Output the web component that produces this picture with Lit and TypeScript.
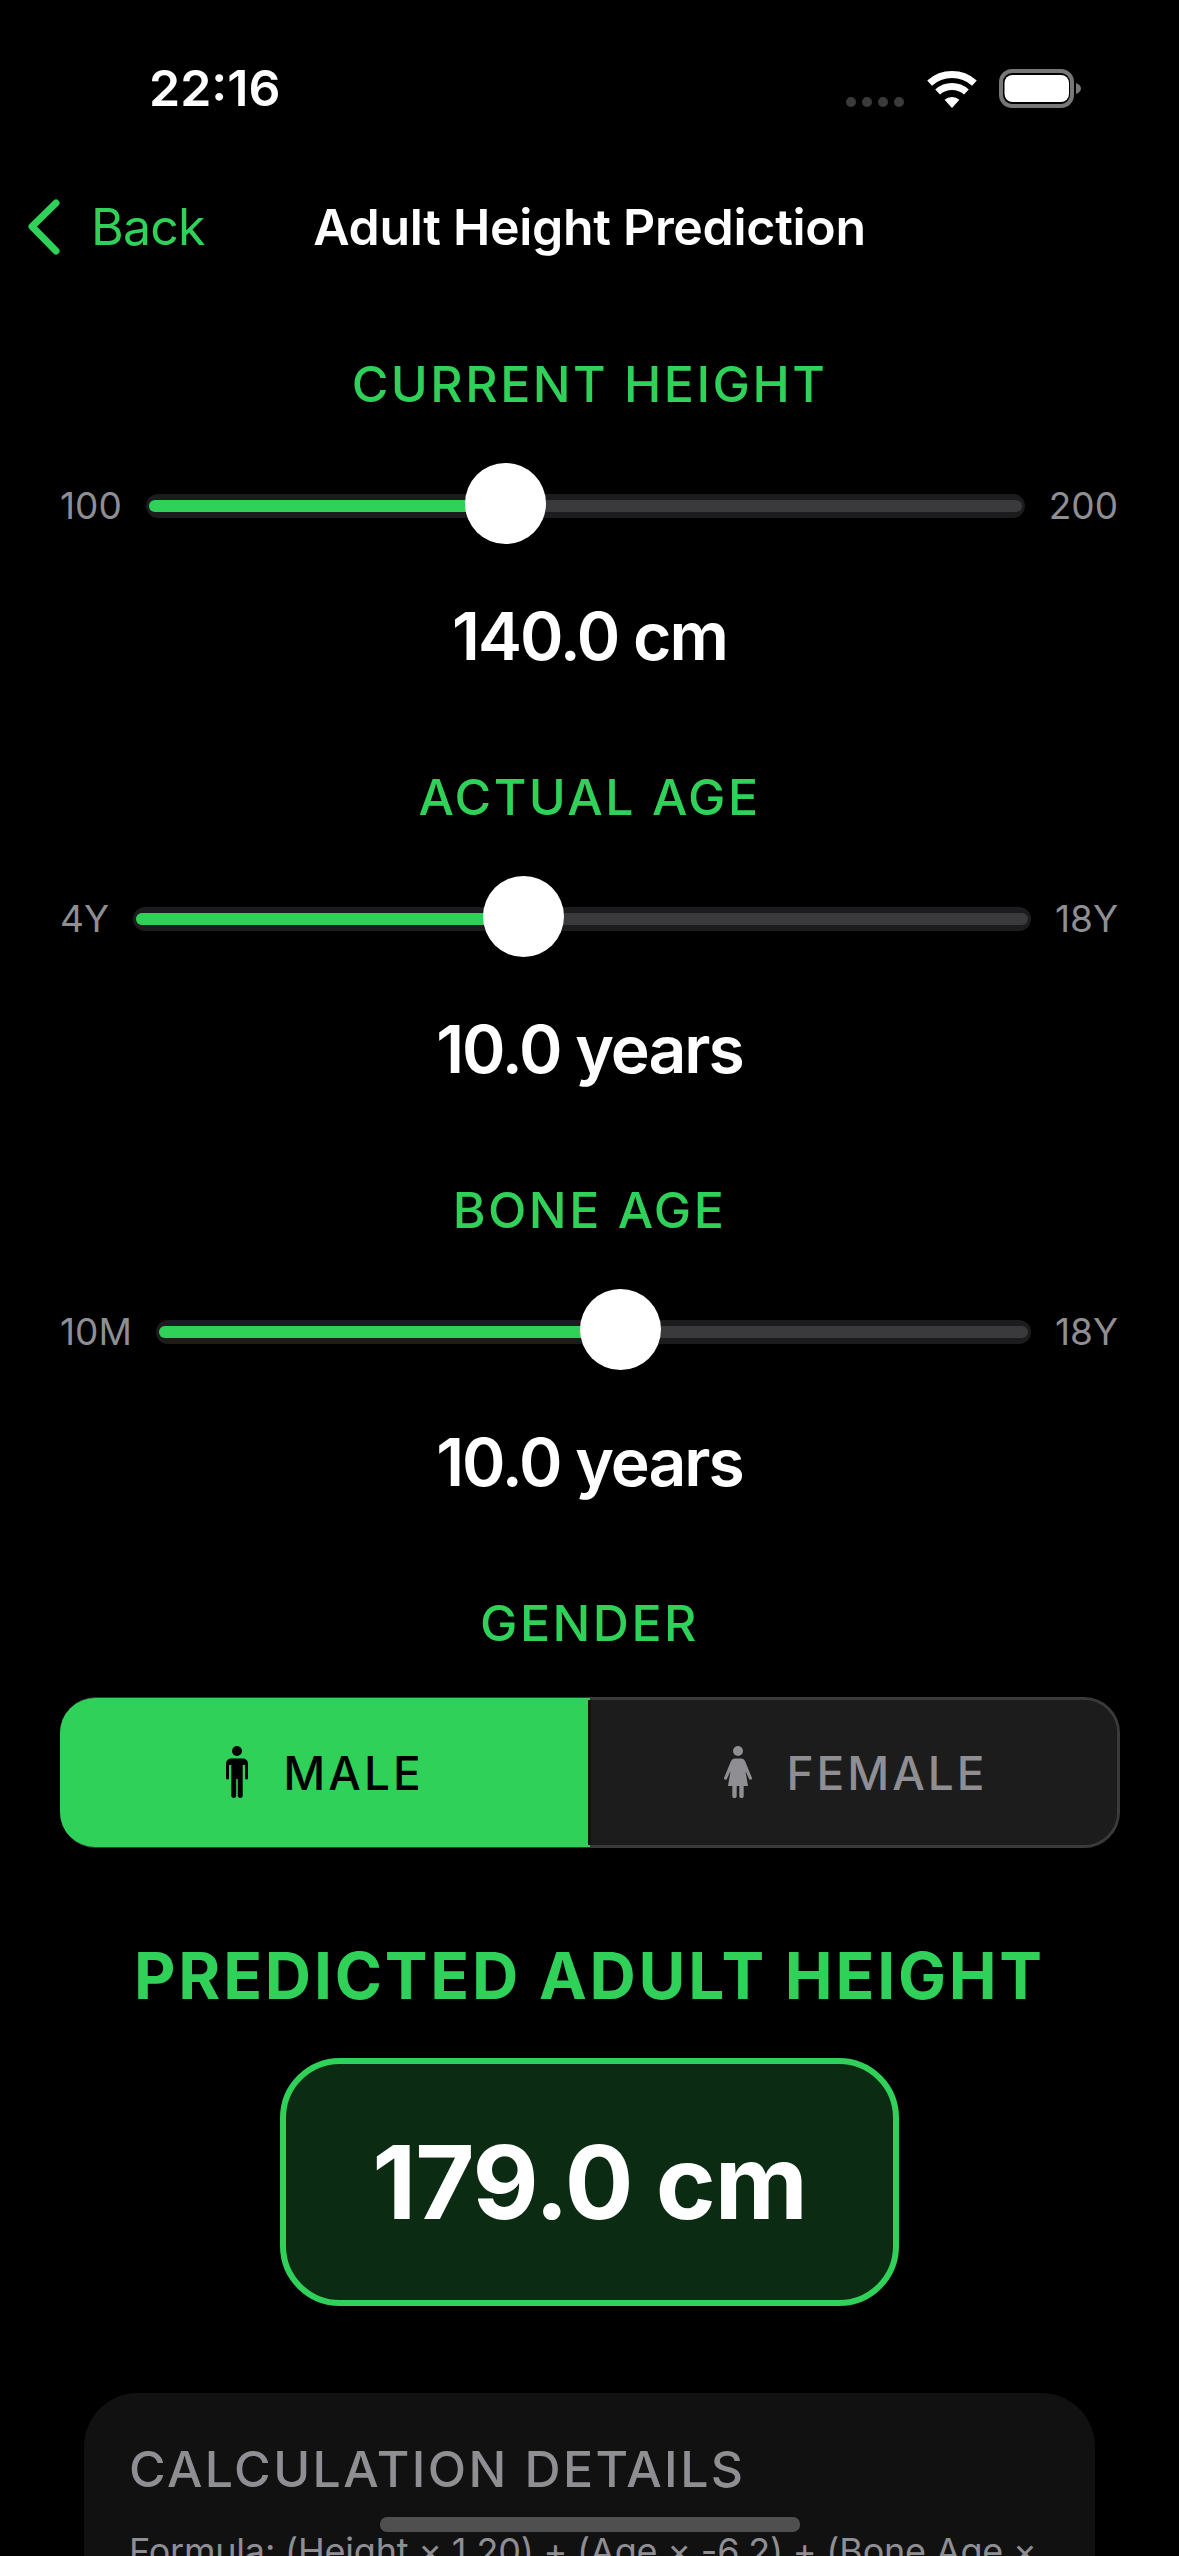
import { LitElement, html, css } from "lit";
import { customElement } from "lit/decorators.js";

interface SliderData {
  label: string;
  min: string;
  max: string;
  frac: number;
  value: string;
}

const SLIDERS: SliderData[] = [
  { label: "CURRENT HEIGHT", min: "100", max: "200", frac: 0.4, value: "140.0 cm" },
  { label: "ACTUAL AGE", min: "4Y", max: "18Y", frac: 6 / 14, value: "10.0 years" },
  { label: "BONE AGE", min: "10M", max: "18Y", frac: 0.534, value: "10.0 years" },
];

const THUMB = 81;

@customElement("app-root")
export class AppRoot extends LitElement {
  static styles = css`
    :host {
      display: block;
      position: relative;
      width: 1179px;
      height: 2556px;
      overflow: hidden;
      background: #000;
      color: #fff;
      font-family: Inter, "Liberation Sans", sans-serif;
    }
    .status {
      height: 176px;
      display: flex;
      align-items: center;
      justify-content: space-between;
      padding: 0 98px 0 149px;
      box-sizing: border-box;
    }
    .time {
      font-size: 50px;
      font-weight: 600;
      line-height: 60px;
      letter-spacing: 0;
    }
    .status-icons {
      display: flex;
      align-items: flex-end;
      gap: 22px;
      height: 40px;
    }
    .dots {
      display: flex;
      gap: 6px;
      margin-right: 1px;
      padding-bottom: 1px;
    }
    .dot {
      width: 10px;
      height: 10px;
      border-radius: 5px;
      background: #3b3b3b;
    }
    .status-icons svg {
      display: block;
    }
    .nav {
      margin-top: 21px;
      height: 60px;
      display: grid;
      grid-template-columns: 1fr auto 1fr;
      align-items: center;
    }
    .back {
      display: flex;
      align-items: center;
      gap: 30px;
      padding-left: 27px;
      color: #30d158;
      font-size: 50px;
      line-height: 60px;
      letter-spacing: -0.8px;
    }
    .back svg {
      display: block;
      flex: none;
    }
    .title {
      font-size: 50px;
      font-weight: 600;
      line-height: 60px;
      letter-spacing: -0.3px;
      white-space: nowrap;
    }
    .sections {
      margin-top: 97px;
      display: flex;
      flex-direction: column;
      gap: 91px;
    }
    .label {
      color: #30d158;
      font-size: 50px;
      font-weight: 500;
      line-height: 60px;
      letter-spacing: 2.5px;
      text-align: center;
      white-space: nowrap;
    }
    .row {
      margin-top: 49px;
      height: 81px;
      padding: 0 61px 0 60px;
      display: flex;
      align-items: center;
      gap: 24px;
    }
    .end {
      color: #8e8e93;
      font-size: 37px;
      line-height: 44px;
      margin-top: 4px;
      white-space: nowrap;
    }
    .track {
      position: relative;
      flex: 1;
      height: 24px;
      margin-top: 5px;
      box-sizing: border-box;
      padding: 6px 3px;
      border-radius: 12px;
      background: #1c1c1e;
    }
    .rail {
      height: 12px;
      border-radius: 6px;
      background: #3a3a3c;
      overflow: hidden;
    }
    .fill {
      height: 100%;
      background: #30d158;
    }
    .thumb {
      position: absolute;
      top: -31px;
      width: 81px;
      height: 81px;
      border-radius: 50%;
      background: #fff;
    }
    .value {
      margin-top: 52px;
      font-size: 66px;
      font-weight: 600;
      line-height: 80px;
      letter-spacing: -2px;
      text-align: center;
      white-space: nowrap;
    }
    .toggle {
      margin: 44px 59px 0 60px;
      height: 151px;
      display: grid;
      grid-template-columns: 1fr 1fr;
      box-sizing: border-box;
      border: 3px solid #3a3a3c;
      border-radius: 36px;
      background: #1c1c1e;
    }
    .opt {
      display: flex;
      align-items: center;
      justify-content: center;
      font-size: 46px;
      font-weight: 500;
      letter-spacing: 3px;
      color: #8e8e93;
    }
    .opt svg {
      display: block;
      flex: none;
      margin-top: -2px;
    }
    .opt.on {
      background: #30d158;
      color: #000;
      gap: 35px;
      margin: -2px 0 -2px -3px;
      border-radius: 35px 0 0 35px;
    }
    .opt.off {
      gap: 34px;
      background: #1c1c1c;
      border-left: 3px solid #141414;
      border-radius: 0 33px 33px 0;
      margin-left: -2px;
      padding-left: 4px;
    }
    .pred {
      margin-top: 88px;
      color: #30d158;
      font-size: 64px;
      font-weight: 700;
      line-height: 80px;
      letter-spacing: 2.8px;
      text-align: center;
      white-space: nowrap;
    }
    .result-wrap {
      margin-top: 42px;
      display: flex;
      justify-content: center;
    }
    .result {
      width: 619px;
      height: 248px;
      box-sizing: border-box;
      border: 6px solid #30d158;
      border-radius: 60px;
      background: #0c2b13;
      display: flex;
      align-items: center;
      justify-content: center;
      font-size: 102px;
      font-weight: 700;
      letter-spacing: -1px;
      white-space: nowrap;
    }
    .card {
      margin: 87px 84px 0;
      padding: 46px 45px 60px;
      background: #111112;
      border-radius: 54px;
      color: #8e8e93;
    }
    .card-title {
      font-size: 50px;
      font-weight: 500;
      line-height: 60px;
      letter-spacing: 2.4px;
      white-space: nowrap;
    }
    .formula {
      margin-top: 22px;
      font-size: 36px;
      line-height: 60px;
      letter-spacing: -0.2px;
    }
    .home {
      position: absolute;
      left: 380px;
      top: 2517px;
      width: 420px;
      height: 15px;
      border-radius: 7px;
      background: #4f4f4f;
    }
  `;

  private wifi() {
    return html`<svg width="50" height="37" viewBox="0 0 50 37" fill="none">
      <path d="M2.6 12.1A33.5 33.5 0 0 1 47.4 12.1" stroke="#fff" stroke-width="7" />
      <path d="M10.6 21A21.5 21.5 0 0 1 39.4 21" stroke="#fff" stroke-width="7" />
      <path d="M25 37L17.6 28.8A11 11 0 0 1 32.4 28.8Z" fill="#fff" />
    </svg>`;
  }

  private battery() {
    return html`<svg width="82" height="39" viewBox="0 0 82 39" fill="none">
      <rect x="2" y="2" width="71" height="35" rx="11" stroke="#777" stroke-width="4" />
      <rect x="5.5" y="6" width="64.5" height="27" rx="8" fill="#fff" />
      <path d="M77 14C80 15 82 17 82 19.500C82 22 80 24 77 25Z" fill="#777" />
    </svg>`;
  }

  private slider(s: SliderData) {
    const left = `calc((100% - ${THUMB}px) * ${s.frac})`;
    const fill = `calc((100% - ${THUMB}px) * ${s.frac} + ${THUMB / 2}px)`;
    return html`<section>
      <div class="label">${s.label}</div>
      <div class="row">
        <span class="end">${s.min}</span>
        <div class="track">
          <div class="rail"><div class="fill" style="width:${fill}"></div></div>
          <div class="thumb" style="left:${left}"></div>
        </div>
        <span class="end">${s.max}</span>
      </div>
      <div class="value">${s.value}</div>
    </section>`;
  }

  render() {
    return html`
      <div class="status">
        <span class="time">22:16</span>
        <div class="status-icons">
          <div class="dots">
            <span class="dot"></span><span class="dot"></span><span class="dot"></span><span class="dot"></span>
          </div>
          ${this.wifi()} ${this.battery()}
        </div>
      </div>
      <div class="nav">
        <div class="back">
          <svg width="34" height="56" viewBox="0 0 34 56" fill="none">
            <path d="M29 4L5 27.500L29 52" stroke="#30d158" stroke-width="7" stroke-linecap="round" stroke-linejoin="round" />
          </svg>
          <span>Back</span>
        </div>
        <div class="title">Adult Height Prediction</div>
        <div></div>
      </div>
      <div class="sections">
        ${SLIDERS.map((s) => this.slider(s))}
        <section>
          <div class="label">GENDER</div>
          <div class="toggle">
            <div class="opt on">
              <svg width="22" height="52" viewBox="0 0 22 52" fill="#000">
                <circle cx="11" cy="5" r="5" />
                <path d="M5 12.500H17A5 5 0 0 1 22 17.500V32A1.500 1.500 0 0 1 19 32V19H16.700V50A2.500 2.500 0 0 1 11.800 50V33H10.200V50A2.500 2.500 0 0 1 5.300 50V19H3V32A1.500 1.500 0 0 1 0 32V17.500A5 5 0 0 1 5 12.500Z" />
              </svg>
              <span>MALE</span>
            </div>
            <div class="opt off">
              <svg width="28" height="52" viewBox="0 0 28 52" fill="#8e8e93">
                <circle cx="14" cy="5" r="5" />
                <path d="M10.500 12.500H17.500Q20 12.500 21 15L27.800 31.500A1.500 1.500 0 0 1 25 32.800L21.500 25L24 40H19.700V50A2.200 2.200 0 0 1 15.300 50V40H12.700V50A2.200 2.200 0 0 1 8.300 50V40H4L6.500 25L3 32.800A1.500 1.500 0 0 1 0.200 31.500L7 15Q8 12.500 10.500 12.500Z" />
              </svg>
              <span>FEMALE</span>
            </div>
          </div>
        </section>
      </div>
      <div class="pred">PREDICTED ADULT HEIGHT</div>
      <div class="result-wrap"><div class="result">179.0 cm</div></div>
      <div class="card">
        <div class="card-title">CALCULATION DETAILS</div>
        <div class="formula">Formula: (Height × 1.20) + (Age × -6.2) + (Bone Age × 1.35) + 76.5</div>
      </div>
      <div class="home"></div>
    `;
  }
}
